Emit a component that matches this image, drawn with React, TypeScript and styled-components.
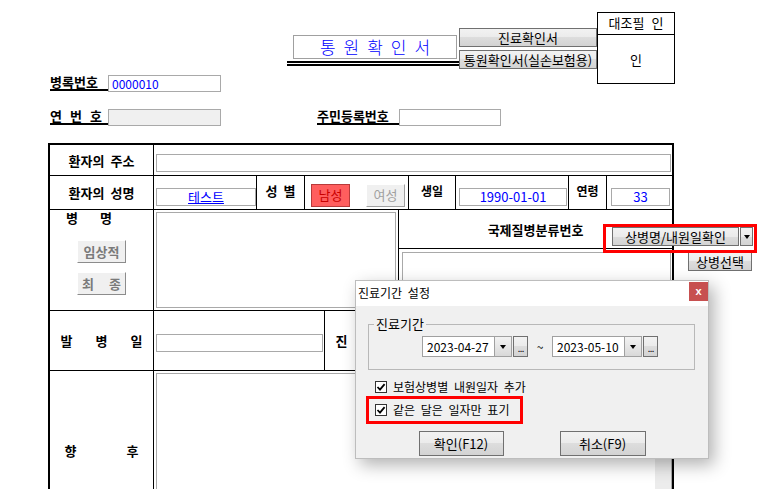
import styled, { createGlobalStyle } from 'styled-components';

const GlobalStyle = createGlobalStyle`
  html, body {
    margin: 0;
    padding: 0;
    background: #fff;
  }
  body {
    font-family: 'Noto Sans CJK KR', 'Noto Sans', sans-serif;
    font-size: 13px;
    color: #000;
  }
  * {
    box-sizing: border-box;
  }
`;

const Page = styled.div`
  position: relative;
  width: 760px;
  height: 489px;
  overflow: hidden;
  background: #fff;
`;

/* ---------- header ---------- */

const Head = styled.div`
  display: flex;
  padding: 12px 0 0 50px;
`;

const HeadLeft = styled.div`
  width: 547px;
`;

const TitleRow = styled.div`
  display: flex;
  height: 63px;
`;

const TitleBlock = styled.div`
  width: 172px;
  margin: 23px 0 0 237px;
`;

const TitleBox = styled.div`
  width: 164px;
  height: 24px;
  margin-left: 6px;
  padding-left: 8px;
  border: 1px solid #a0a0a0;
  color: #0000ff;
  font-size: 17px;
  font-weight: 300;
  line-height: 22px;
  letter-spacing: 8px;
  text-align: center;
`;

const DoubleRule = styled.div`
  width: 173px;
  height: 5px;
  margin-top: 2px;
  border-top: 2px solid #000;
  border-bottom: 2px solid #000;
`;

const DocButtons = styled.div`
  display: flex;
  flex-direction: column;
  gap: 3px;
  margin-top: 16px;
`;

const WinButton = styled.button<{ $w: number; $h: number }>`
  width: ${p => p.$w}px;
  height: ${p => p.$h}px;
  padding: 0;
  border: 1px solid #707070;
  background: linear-gradient(to bottom, #f2f2f2 0%, #ebebeb 50%, #dddddd 50%, #d3d3d3 100%);
  font-family: inherit;
  font-size: 13px;
  line-height: 15px;
  color: #000;
  white-space: nowrap;
`;

const InfoRow = styled.div<{ $top: number }>`
  display: flex;
  height: 17px;
  margin-top: ${p => p.$top}px;
`;

const FieldLabel = styled.div<{ $w: number; $left?: number; $spread?: boolean }>`
  display: flex;
  justify-content: ${p => (p.$spread ? 'space-between' : 'flex-start')};
  width: ${p => p.$w}px;
  height: 16px;
  margin-left: ${p => p.$left ?? 0}px;
  padding-right: ${p => (p.$spread ? 6 : 0)}px;
  border-bottom: 2px solid #000;
  font-weight: 700;
  line-height: 14px;
  white-space: nowrap;
`;

const TextBox = styled.div<{ $w: number; $gray?: boolean }>`
  width: ${p => p.$w}px;
  height: 17px;
  padding-left: 3px;
  border: 1px solid #a9a9a9;
  background: ${p => (p.$gray ? '#f0f0f0' : '#fff')};
  color: #0000ff;
  font-size: 12px;
  line-height: 15px;
`;

const Stamp = styled.div`
  display: flex;
  flex-direction: column;
  width: 78px;
  height: 72px;
  border: 1px solid #000;
`;

const StampHead = styled.div`
  height: 22px;
  border-bottom: 1px solid #000;
  text-align: center;
  line-height: 20px;
  word-spacing: 4px;
`;

const StampBody = styled.div`
  flex: 1;
  display: flex;
  align-items: center;
  justify-content: center;
`;

/* ---------- form table ---------- */

const FormTable = styled.div`
  width: 626px;
  margin: 17px 0 0 48px;
  border: 2px solid #000;
  border-bottom: none;
`;

const Row = styled.div<{ $h: number }>`
  display: flex;
  height: ${p => p.$h}px;
  border-bottom: 1px solid #000;
`;

const LabelCell = styled.div<{ $column?: boolean }>`
  display: flex;
  flex-direction: ${p => (p.$column ? 'column' : 'row')};
  align-items: center;
  justify-content: ${p => (p.$column ? 'flex-start' : 'center')};
  flex: none;
  width: 104px;
  border-right: 1px solid #000;
  font-weight: 700;
  line-height: 15px;
  word-spacing: 3px;
  white-space: nowrap;
`;

const Cell = styled.div<{
  $w?: number;
  $line?: boolean;
  $align?: string;
  $pad?: string;
  $column?: boolean;
}>`
  display: flex;
  flex-direction: ${p => (p.$column ? 'column' : 'row')};
  align-items: ${p => p.$align ?? 'stretch'};
  ${p => (p.$w ? `width: ${p.$w}px; flex: none;` : 'flex: 1;')}
  padding: ${p => p.$pad ?? '0'};
  border-right: ${p => (p.$line ? '1px solid #000' : 'none')};
`;

const SmallLabel = styled(Cell)`
  justify-content: center;
  align-items: center;
  padding-bottom: 4px;
  font-size: 12px;
  font-weight: 700;
  line-height: 14px;
  word-spacing: 3px;
  white-space: nowrap;
`;

const Spread = styled.div<{ $w: number; $left?: number }>`
  display: flex;
  justify-content: space-between;
  width: ${p => p.$w}px;
  ${p => (p.$left !== undefined ? `align-self: flex-start; margin-left: ${p.$left}px;` : '')}
`;

const Input = styled.div<{ $w?: number; $center?: boolean; $link?: boolean }>`
  ${p => (p.$w ? `width: ${p.$w}px;` : 'flex: 1;')}
  height: 18px;
  border: 1px solid #a9a9a9;
  background: #fff;
  color: #0000ff;
  font-size: 13px;
  line-height: 16px;
  text-align: ${p => (p.$center ? 'center' : 'left')};
  text-decoration: ${p => (p.$link ? 'underline' : 'none')};
`;

const GenderButton = styled.div<{ $active?: boolean }>`
  width: 39px;
  height: 23px;
  border: 1px solid;
  border-color: ${p => (p.$active ? '#b83a3a' : '#fff #a0a0a0 #a0a0a0 #fff')};
  background: ${p => (p.$active ? '#ff5e5e' : '#f0f0f0')};
  color: ${p => (p.$active ? '#c80000' : '#a0a0a0')};
  font-size: 13px;
  line-height: 20px;
  text-align: center;
`;

const RaisedButton = styled.div<{ $top: number }>`
  display: flex;
  justify-content: center;
  align-items: center;
  width: 49px;
  height: 23px;
  margin-top: ${p => p.$top}px;
  border: 1px solid;
  border-color: #fff #8c8c8c #8c8c8c #fff;
  background: #f0f0f0;
  color: #7a7a7a;
  font-weight: 700;
`;

const TextArea = styled.div`
  flex: 1;
  display: flex;
  justify-content: flex-end;
  border: 1px solid #a9a9a9;
  background: #fff;
`;

const ScrollTrack = styled.div`
  width: 16px;
  background: #ececec;
`;

const SubHead = styled.div`
  display: flex;
  align-items: center;
  justify-content: center;
  height: 39px;
  border-bottom: 1px solid #000;
  font-weight: 700;
`;

/* ---------- floating controls ---------- */

const ToolCluster = styled.div`
  position: absolute;
  left: 603px;
  top: 224px;
  display: flex;
  flex-direction: column;
  align-items: flex-end;
`;

const Highlight = styled.div<{ $w: number; $h: number; $align?: string }>`
  position: relative;
  z-index: 1;
  display: flex;
  align-items: ${p => p.$align ?? 'center'};
  width: ${p => p.$w}px;
  height: ${p => p.$h}px;
  padding-left: 6px;
  border: 3px solid #ff0000;
`;

const SplitWrap = styled.div`
  display: flex;
`;

const Caret = styled.span`
  display: inline-block;
  border-left: 3.5px solid transparent;
  border-right: 3.5px solid transparent;
  border-top: 4px solid #000;
`;

const ArrowButton = styled(WinButton)`
  display: flex;
  align-items: center;
  justify-content: center;
  margin-left: 1px;
`;

const PickButton = styled(WinButton)`
  margin: -1px 5px 0 0;
`;

/* ---------- dialog ---------- */

const Dialog = styled.div`
  position: absolute;
  left: 355px;
  top: 280px;
  display: flex;
  flex-direction: column;
  width: 354px;
  height: 179px;
  border: 1px solid #bdbdbd;
  background: #f0f0f0;
  box-shadow: 5px 6px 16px rgba(0, 0, 0, 0.3);
`;

const DialogTitle = styled.div`
  display: flex;
  justify-content: space-between;
  height: 25px;
  padding: 1px 0 0 2px;
  background: #fff;
  font-size: 12px;
  line-height: 21px;
  word-spacing: 3px;
`;

const CloseButton = styled.div`
  width: 19px;
  height: 19px;
  background: #c75050;
  color: #fff;
  font-family: 'Liberation Sans', Arial, sans-serif;
  font-size: 11px;
  font-weight: 700;
  line-height: 18px;
  text-align: center;
`;

const PeriodSet = styled.fieldset`
  margin: 11px 13px 0 12px;
  padding: 0;
  border: 1px solid #b8b8b8;
  min-width: 0;
`;

const PeriodLegend = styled.legend`
  margin-left: 5px;
  padding: 0 2px;
  font-size: 13px;
  line-height: 14px;
`;

const DateRow = styled.div`
  display: flex;
  align-items: center;
  padding: 5px 0 12px 53px;
`;

const DateField = styled.div`
  display: flex;
  height: 21px;
`;

const DateText = styled.div`
  width: 72px;
  padding-left: 4px;
  border: 1px solid #a0a0a0;
  border-right: none;
  background: #fff;
  font-size: 12px;
  line-height: 19px;
`;

const DropPart = styled.div`
  display: flex;
  align-items: center;
  justify-content: center;
  width: 18px;
  border: 1px solid #a0a0a0;
  background: linear-gradient(to bottom, #f2f2f2 0%, #e6e6e6 50%, #d8d8d8 100%);
`;

const DotsPart = styled.div`
  width: 15px;
  margin-left: 1px;
  border: 1px solid #707070;
  background: linear-gradient(to bottom, #f2f2f2 0%, #ebebeb 50%, #dddddd 50%, #d3d3d3 100%);
  font-family: 'Liberation Sans', Arial, sans-serif;
  font-size: 11px;
  line-height: 22px;
  text-align: center;
  letter-spacing: -1px;
`;

const Tilde = styled.div`
  width: 24px;
  text-align: center;
  font-size: 12px;
`;

const CheckRow = styled.div<{ $top: number }>`
  display: flex;
  align-items: center;
  gap: 6px;
  height: 14px;
  margin: ${p => p.$top}px 0 0 19px;
  font-size: 12px;
  line-height: 14px;
  word-spacing: 3px;
  white-space: nowrap;
`;

const CheckHighlight = styled(Highlight)`
  gap: 6px;
  margin: 2px 0 0 10px;
  font-size: 12px;
  line-height: 14px;
  word-spacing: 3px;
  white-space: nowrap;
`;

const Box = styled.span`
  display: flex;
  align-items: center;
  justify-content: center;
  width: 12px;
  height: 12px;
  border: 1px solid #333;
  background: #fff;
`;

const DialogActions = styled.div`
  display: flex;
  justify-content: center;
  gap: 56px;
  margin-top: 7px;
`;

const Check = () => (
  <Box>
    <svg width="10" height="10" viewBox="0 0 10 10">
      <path d="M1.5 5 L4 7.6 L8.6 2.2" fill="none" stroke="#000" strokeWidth="1.8" />
    </svg>
  </Box>
);

const DatePicker = ({ value }: { value: string }) => (
  <DateField>
    <DateText>{value}</DateText>
    <DropPart>
      <Caret />
    </DropPart>
    <DotsPart>...</DotsPart>
  </DateField>
);

const SpreadText = ({ text, w, left }: { text: string; w: number; left?: number }) => (
  <Spread $w={w} $left={left}>
    {text.split(' ').map((ch, i) => (
      <span key={i}>{ch}</span>
    ))}
  </Spread>
);

export default function App() {
  return (
    <Page>
      <GlobalStyle />

      <Head>
        <HeadLeft>
          <TitleRow>
            <TitleBlock>
              <TitleBox>통원확인서</TitleBox>
              <DoubleRule />
            </TitleBlock>
            <DocButtons>
              <WinButton $w={138} $h={19}>진료확인서</WinButton>
              <WinButton $w={138} $h={19}>통원확인서(실손보험용)</WinButton>
            </DocButtons>
          </TitleRow>

          <InfoRow $top={0}>
            <FieldLabel $w={58}>병록번호</FieldLabel>
            <TextBox $w={113}>0000010</TextBox>
          </InfoRow>

          <InfoRow $top={17}>
            <FieldLabel $w={58} $spread>
              <span>연</span>
              <span>번</span>
              <span>호</span>
            </FieldLabel>
            <TextBox $w={113} $gray />
            <FieldLabel $w={82} $left={96}>주민등록번호</FieldLabel>
            <TextBox $w={102} />
          </InfoRow>
        </HeadLeft>

        <Stamp>
          <StampHead>대조필 인</StampHead>
          <StampBody>인</StampBody>
        </Stamp>
      </Head>

      <FormTable>
        <Row $h={31}>
          <LabelCell>환자의 주소</LabelCell>
          <Cell $align="flex-end" $pad="0 1px 3px 2px">
            <Input />
          </Cell>
        </Row>

        <Row $h={34}>
          <LabelCell>환자의 성명</LabelCell>
          <Cell $w={103} $line $align="flex-end" $pad="0 0 3px 2px">
            <Input $w={100} $center $link>테스트</Input>
          </Cell>
          <SmallLabel $w={48} $line>
            <span style={{ fontSize: 13 }}>성 별</span>
          </SmallLabel>
          <Cell $w={104} $line $align="flex-end" $pad="0 0 2px 6px">
            <GenderButton $active>남성</GenderButton>
            <GenderButton style={{ marginLeft: 16 }}>여성</GenderButton>
          </Cell>
          <SmallLabel $w={47} $line>생일</SmallLabel>
          <Cell $w={113} $line $align="flex-end" $pad="0 0 3px 3px">
            <Input $w={108} $center>1990-01-01</Input>
          </Cell>
          <SmallLabel $w={38} $line>연령</SmallLabel>
          <Cell $align="flex-end" $pad="0 0 3px 4px">
            <Input $w={59} $center>33</Input>
          </Cell>
        </Row>

        <Row $h={101}>
          <LabelCell $column>
            <SpreadText text="병 명" w={46} left={16} />
            <RaisedButton $top={15}>임상적</RaisedButton>
            <RaisedButton $top={9}>
              <SpreadText text="최 종" w={39} />
            </RaisedButton>
          </LabelCell>
          <Cell $w={245} $line $pad="2px">
            <TextArea />
          </Cell>
          <Cell $column>
            <SubHead>국제질병분류번호</SubHead>
            <Cell $pad="3px 1px 2px 3px">
              <TextArea />
            </Cell>
          </Cell>
        </Row>

        <Row $h={60}>
          <LabelCell>
            <SpreadText text="발 병 일" w={82} />
          </LabelCell>
          <Cell $w={171} $line $align="flex-start" $pad="23px 0 0 2px">
            <Input $w={167} />
          </Cell>
          <LabelCell>
            <SpreadText text="진" w={82} />
          </LabelCell>
          <Cell $align="flex-start" $pad="23px 1px 0 2px">
            <Input />
          </Cell>
        </Row>

        <Row $h={160}>
          <LabelCell>
            <SpreadText text="향 후" w={74} />
          </LabelCell>
          <Cell $pad="2px 0 0 2px">
            <TextArea>
              <ScrollTrack />
            </TextArea>
          </Cell>
        </Row>
      </FormTable>

      <ToolCluster>
        <Highlight $w={154} $h={29} $align="flex-start">
          <SplitWrap>
            <WinButton $w={127} $h={19}>상병명/내원일확인</WinButton>
            <ArrowButton $w={13} $h={19}>
              <Caret />
            </ArrowButton>
          </SplitWrap>
        </Highlight>
        <PickButton $w={64} $h={19}>상병선택</PickButton>
      </ToolCluster>

      <Dialog>
        <DialogTitle>
          <span>진료기간 설정</span>
          <CloseButton>x</CloseButton>
        </DialogTitle>

        <PeriodSet>
          <PeriodLegend>진료기간</PeriodLegend>
          <DateRow>
            <DatePicker value="2023-04-27" />
            <Tilde>~</Tilde>
            <DatePicker value="2023-05-10" />
          </DateRow>
        </PeriodSet>

        <CheckRow $top={10}>
          <Check />
          보험상병별 내원일자 추가
        </CheckRow>

        <CheckHighlight $w={157} $h={28}>
          <Check />
          같은 달은 일자만 표기
        </CheckHighlight>

        <DialogActions>
          <WinButton $w={85} $h={25}>확인(F12)</WinButton>
          <WinButton $w={86} $h={25}>취소(F9)</WinButton>
        </DialogActions>
      </Dialog>
    </Page>
  );
}
